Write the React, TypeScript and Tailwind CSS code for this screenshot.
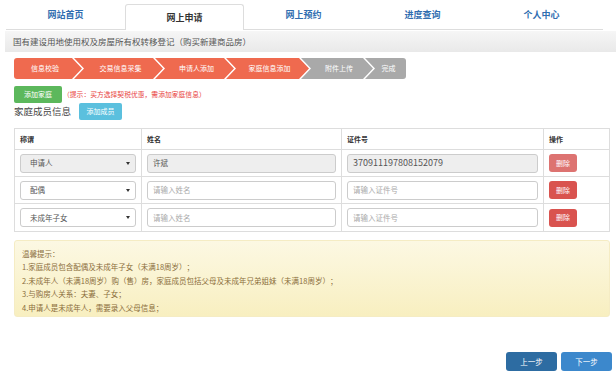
const tabs = ["网站首页", "网上申请", "网上预约", "进度查询", "个人中心"];

const steps = [
  { label: "信息校验", w: "w-[68px]", done: true },
  { label: "交易信息采集", w: "w-[89px]", done: true },
  { label: "申请人添加", w: "w-[79px]", done: true },
  { label: "家庭信息添加", w: "w-[83px]", done: true },
  { label: "附件上传", w: "w-[72px]", done: false },
  { label: "完成", w: "w-[41px]", done: false },
];

const rows = [
  { role: "申请人", name: "许斌", id: "370911197808152079", locked: true },
  { role: "配偶", name: "", id: "", locked: false },
  { role: "未成年子女", name: "", id: "", locked: false },
];

const tips = [
  "温馨提示：",
  "1.家庭成员包含配偶及未成年子女（未满18周岁）；",
  "2.未成年人（未满18周岁）购（售）房，家庭成员包括父母及未成年兄弟姐妹（未满18周岁）；",
  "3.与购房人关系：夫妻、子女；",
  "4.申请人是未成年人，需要录入父母信息；",
];

function Steps() {
  return (
    <div className="flex h-[21px] ml-[14px] mt-[6px]">
      {steps.map((s, i) => {
        const first = i === 0;
        const last = i === steps.length - 1;
        const clip = first
          ? "[clip-path:polygon(0_0,calc(100%-10px)_0,100%_50%,calc(100%-10px)_100%,0_100%)] rounded-l-[3px]"
          : last
          ? "[clip-path:polygon(0_0,100%_0,100%_100%,0_100%,10px_50%)] rounded-r-[3px]"
          : "[clip-path:polygon(0_0,calc(100%-10px)_0,100%_50%,calc(100%-10px)_100%,0_100%,10px_50%)]";
        return (
          <div
            key={s.label}
            className={`${s.w} ${clip} ${first ? "" : "-ml-[8px]"} ${s.done ? "bg-[#ef6a4f]" : "bg-[#a9a9a9]"} flex items-center justify-center ${first ? "pr-[6px]" : last ? "pl-[6px]" : "pl-[4px]"} text-[7px] text-white`}
          >
            {s.label}
          </div>
        );
      })}
    </div>
  );
}

function Select({ value, locked }: { value: string; locked: boolean }) {
  return (
    <div
      className={`h-[19px] flex items-center justify-between rounded-[3px] border border-[#ccc] pl-[9px] pr-[5px] text-[7.5px] text-[#555] ${locked ? "bg-[#eee]" : "bg-white"}`}
    >
      <span>{value}</span>
      <span className="w-0 h-0 border-l-[2px] border-r-[2px] border-t-[3px] border-l-transparent border-r-transparent border-t-[#333]" />
    </div>
  );
}

function Field({ value, placeholder, locked, mono }: { value: string; placeholder: string; locked: boolean; mono?: boolean }) {
  return (
    <div
      className={`h-[19px] flex items-center rounded-[3px] border border-[#ccc] px-[5px] ${value && mono ? "text-[9px]" : "text-[7.5px]"} ${locked ? "bg-[#eee] text-[#555]" : "bg-white text-[#aaa]"}`}
    >
      {value || placeholder}
    </div>
  );
}

export default function App() {
  return (
    <div
      lang="zh-CN"
      className="w-[616px] h-[382px] bg-white font-['Noto_Sans_CJK_SC',sans-serif] [text-spacing-trim:space-all] overflow-hidden"
    >
      <div className="flex h-[30px] mx-[6px] w-[597px] border-b border-[#ddd]">
        {tabs.map((t, i) => (
          <div
            key={t}
            className={`w-[119px] flex items-center justify-center text-[9px] font-bold ${i === 1 ? "mt-[4px] -mb-px bg-white border border-b-0 border-[#ddd] rounded-t-[3px] text-[#333]" : "text-[#2f6db0]"}`}
          >
            {t}
          </div>
        ))}
      </div>
      <div className="ml-[5px] h-[21px] mt-px bg-gradient-to-b from-[#f6f6f6] to-[#e9e9e9] flex items-center pl-[8px] text-[8.5px] text-[#555]">
        国有建设用地使用权及房屋所有权转移登记（购买新建商品房）
      </div>

      <Steps />

      <div className="flex items-center ml-[14px] mt-[7px]">
        <div className="w-[48px] h-[17px] rounded-[2px] bg-[#5cb85c] text-white text-[7px] flex items-center justify-center">
          添加家庭
        </div>
        <span className="ml-[1px] text-[6.8px] text-[#e8413c]">（提示：买方选择契税优惠，需添加家庭信息）</span>
      </div>
      <div className="flex items-center ml-[14px]">
        <span className="text-[9.5px] text-[#444] leading-none">家庭成员信息</span>
        <div className="ml-[8px] w-[43px] h-[17px] rounded-[2px] bg-[#5bc0de] text-white text-[7px] flex items-center justify-center">
          添加成员
        </div>
      </div>

      <div className="ml-[14px] mt-[8px] w-[596px] border border-[#ddd] text-[7px]">
        <div className="grid grid-cols-[127px_200px_202px_1fr] h-[21px] border-b border-[#ddd] font-bold text-[#333]">
          <div className="flex items-center pl-[5px] border-r border-[#ddd]">称谓</div>
          <div className="flex items-center pl-[5px] border-r border-[#ddd]">姓名</div>
          <div className="flex items-center pl-[5px] border-r border-[#ddd]">证件号</div>
          <div className="flex items-center pl-[5px]">操作</div>
        </div>
        {rows.map((r, i) => (
          <div
            key={r.role}
            className={`grid grid-cols-[127px_200px_202px_1fr] h-[27px] ${i < rows.length - 1 ? "border-b border-[#ddd]" : ""}`}
          >
            <div className="flex flex-col justify-center px-[5px] border-r border-[#ddd]">
              <Select value={r.role} locked={r.locked} />
            </div>
            <div className="flex flex-col justify-center px-[5px] border-r border-[#ddd]">
              <Field value={r.name} placeholder="请输入姓名" locked={r.locked} />
            </div>
            <div className="flex flex-col justify-center px-[5px] border-r border-[#ddd]">
              <Field value={r.id} placeholder="请输入证件号" locked={r.locked} mono />
            </div>
            <div className="flex items-center pl-[5px]">
              <div
                className={`w-[28px] h-[18px] rounded-[3px] flex items-center justify-center text-white text-[7px] ${r.locked ? "bg-[#dd7371]" : "bg-[#d9534f]"}`}
              >
                删除
              </div>
            </div>
          </div>
        ))}
      </div>

      <div className="ml-[14px] mt-[8px] w-[596px] h-[77px] rounded-[3px] border border-[#f5ecc4] bg-gradient-to-b from-[#fcf8e3] to-[#f8efc0] pl-[7px] pt-[6px] text-[7.5px] leading-[13.4px] text-[#8a6d3b]">
        {tips.map((t) => (
          <div key={t}>{t}</div>
        ))}
      </div>

      <div className="flex justify-end gap-[4px] mr-[4px] mt-[35px]">
        <div className="w-[51px] h-[19px] rounded-[3px] bg-[#2d6ca2] text-white text-[7.5px] flex items-center justify-center">
          上一步
        </div>
        <div className="w-[51px] h-[19px] rounded-[3px] bg-[#3c88cc] text-white text-[7.5px] flex items-center justify-center">
          下一步
        </div>
      </div>
    </div>
  );
}
